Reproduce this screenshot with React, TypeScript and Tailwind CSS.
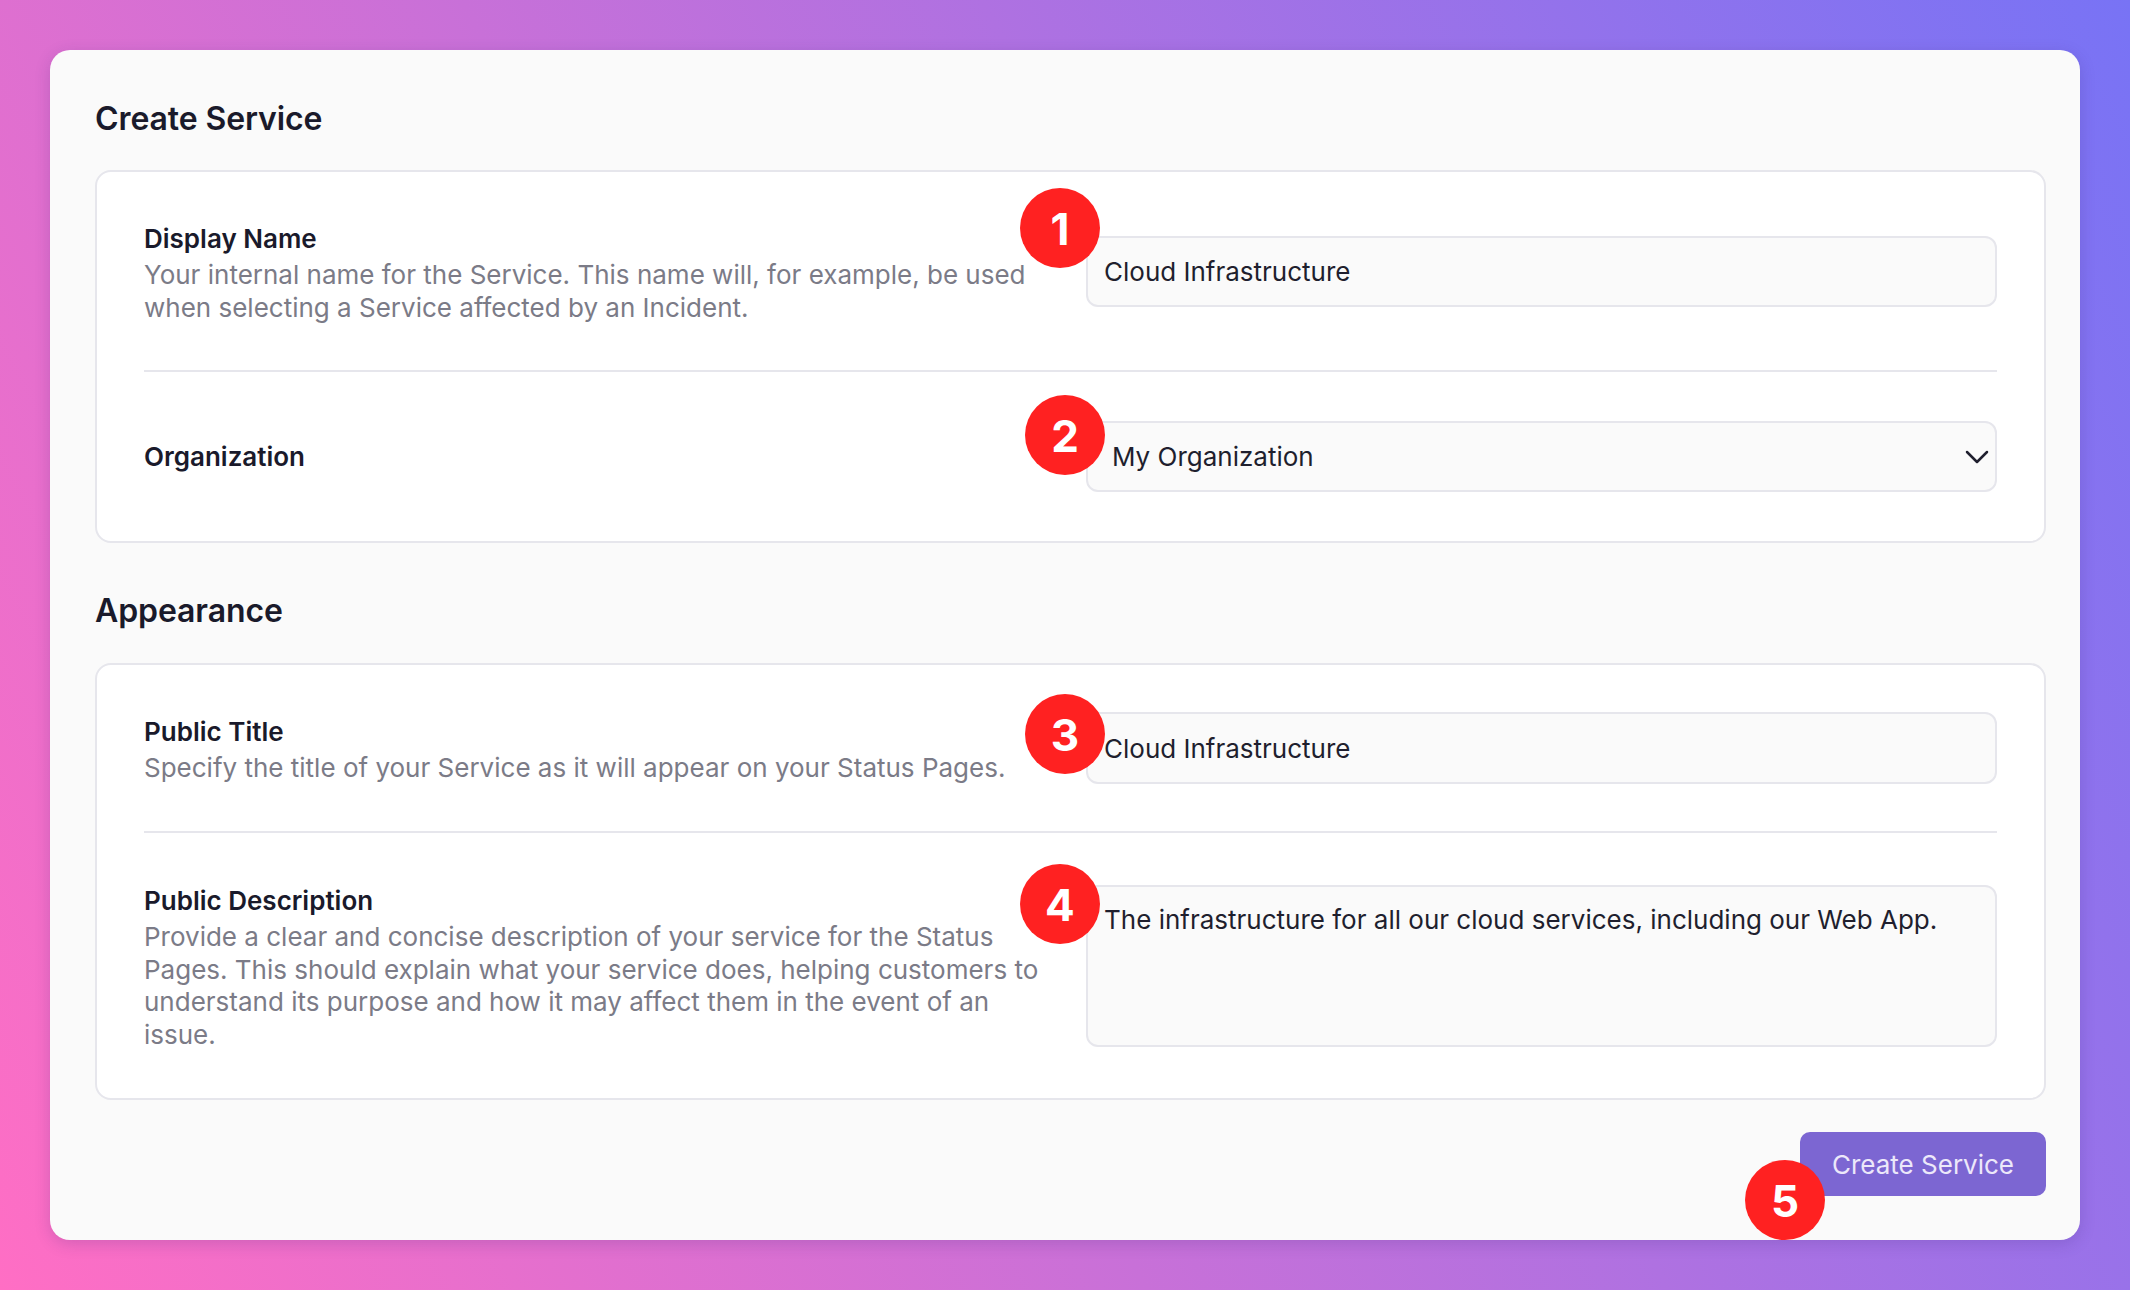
function Badge({ n, className }: { n: number; className: string }) {
  return (
    <div
      className={`absolute z-10 flex h-20 w-20 items-center justify-center rounded-full bg-[#ff2121] pt-[1px] text-[44px] font-bold text-white ${className}`}
    >
      {n}
    </div>
  )
}

function Field({ children, className = "" }: { children: React.ReactNode; className?: string }) {
  return (
    <div
      className={`w-[911px] shrink-0 rounded-xl border-2 border-[#e6e6ec] bg-[#fafafa] text-[26px] leading-[33px] text-[#1f1f2e] ${className}`}
    >
      {children}
    </div>
  )
}

function Row({ title, children, field }: { title: string; children?: React.ReactNode; field: React.ReactNode }) {
  return (
    <div className="flex items-center justify-between">
      <div className="w-[900px] pt-[3px]">
        <div className="mb-[3px] text-[26px] leading-[35px] font-semibold text-[#1a1a2b]">{title}</div>
        {children && <p className="text-[26px] leading-[32.5px] text-[#7b7b87]">{children}</p>}
      </div>
      {field}
    </div>
  )
}

export default function App() {
  return (
    <div className="min-h-[1290px] bg-[linear-gradient(62deg,#ff6ec4,#7873f5)] p-[50px] font-['Inter',sans-serif]">
      <div className="relative h-[1190px] rounded-[20px] bg-[#fafafa] pt-[47px] pr-[34px] pl-[45px] shadow-[0_4px_16px_rgba(60,40,120,0.2)]">
        <h2 className="mb-[29px] text-[32px] leading-[44px] font-semibold tracking-[-0.1px] text-[#1a1a2b]">Create Service</h2>

        <div className="rounded-2xl border-2 border-[#e6e6ec] bg-white px-[47px]">
          <div className="flex h-[200px] items-center border-b-2 border-[#e6e6ec]">
            <Row
              title="Display Name"
              field={<Field className="ml-[42px] flex h-[71px] items-center pl-[16px]">Cloud Infrastructure</Field>}
            >
              Your internal name for the Service. This name will, for example, be used when selecting a Service affected by an Incident.
            </Row>
          </div>
          <div className="flex h-[169px] items-center">
            <Row
              title="Organization"
              field={
                <Field className="ml-[42px] flex h-[71px] items-center justify-between pr-[3px] pl-[24px]">
                  My Organization
                  <svg width="30" height="30" viewBox="0 0 24 24" fill="none" stroke="#1f1f2e" strokeWidth="2" strokeLinecap="round" strokeLinejoin="round">
                    <path d="m4 8 8 8 8-8" />
                  </svg>
                </Field>
              }
            />
          </div>
        </div>

        <h2 className="mt-[46px] mb-[30px] text-[32px] leading-[44px] font-semibold tracking-[-0.1px] text-[#1a1a2b]">Appearance</h2>

        <div className="rounded-2xl border-2 border-[#e6e6ec] bg-white px-[47px]">
          <div className="flex h-[168px] items-center border-b-2 border-[#e6e6ec]">
            <Row
              title="Public Title"
              field={<Field className="ml-[42px] flex h-[72px] items-center pl-[16px]">Cloud Infrastructure</Field>}
            >
              Specify the title of your Service as it will appear on your Status Pages.
            </Row>
          </div>
          <div className="flex h-[265px] items-center">
            <Row
              title="Public Description"
              field={<Field className="ml-[42px] h-[162px] pt-[16px] pl-[16px]">The infrastructure for all our cloud services, including our Web App.</Field>}
            >
              Provide a clear and concise description of your service for the Status Pages. This should explain what your service does, helping customers to understand its purpose and how it may affect them in the event of an issue.
            </Row>
          </div>
        </div>

        <div className="mt-[32px] flex justify-end">
          <button className="h-16 w-[246px] rounded-[10px] bg-[#7c66d2] text-[26px] text-[#ece8fa]">Create Service</button>
        </div>

        <Badge n={1} className="top-[138px] left-[970px]" />
        <Badge n={2} className="top-[345px] left-[975px]" />
        <Badge n={3} className="top-[644px] left-[975px]" />
        <Badge n={4} className="top-[814px] left-[970px]" />
        <Badge n={5} className="top-[1110px] left-[1695px]" />
      </div>
    </div>
  )
}
